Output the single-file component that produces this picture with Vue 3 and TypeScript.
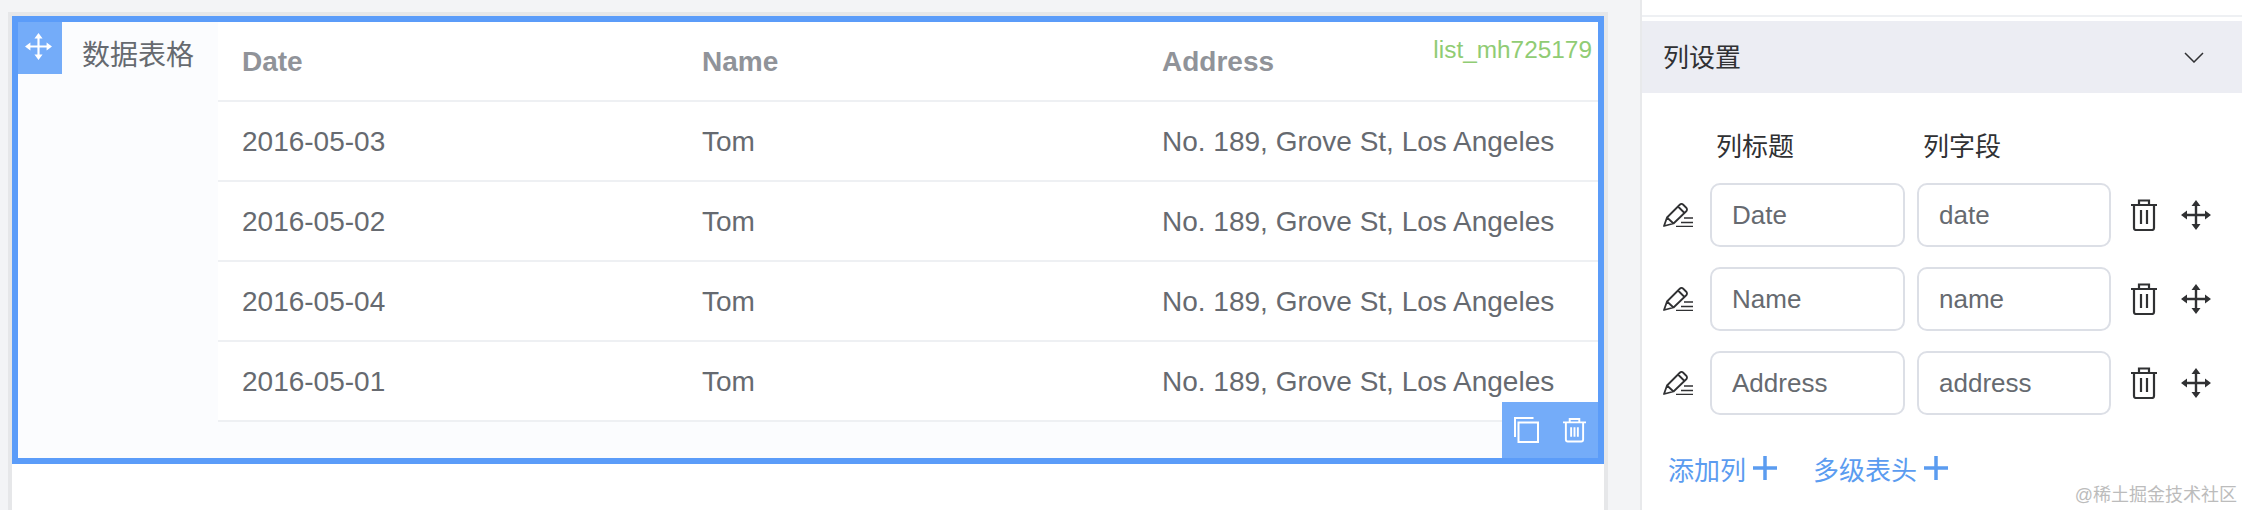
<script setup lang="ts">
interface Row { date: string; name: string; address: string }
const rows: Row[] = [
  { date: '2016-05-03', name: 'Tom', address: 'No. 189, Grove St, Los Angeles' },
  { date: '2016-05-02', name: 'Tom', address: 'No. 189, Grove St, Los Angeles' },
  { date: '2016-05-04', name: 'Tom', address: 'No. 189, Grove St, Los Angeles' },
  { date: '2016-05-01', name: 'Tom', address: 'No. 189, Grove St, Los Angeles' },
]
const columns = [
  { title: 'Date', field: 'date' },
  { title: 'Name', field: 'name' },
  { title: 'Address', field: 'address' },
]
</script>

<template>
  <div class="page">
    <main class="stage">
      <div class="canvas">
        <section class="widget">
          <div class="handle">
            <svg class="move-white" viewBox="0 0 30 30">
              <path d="M15 3v24M3 15h24" fill="none" stroke="currentColor" stroke-width="2.400" />
              <path d="M15 0l4.500 6h-9zM15 30l4.500-6h-9zM0 15l6-4.500v9zM30 15l-6-4.500v9z" fill="currentColor" />
            </svg>
          </div>
          <span class="widget-id">list_mh725179</span>
          <div class="form-label">数据表格</div>
          <table class="data-table">
            <thead>
              <tr>
                <th v-for="c in columns" :key="c.field">{{ c.title }}</th>
              </tr>
            </thead>
            <tbody>
              <tr v-for="(r, i) in rows" :key="i">
                <td>{{ r.date }}</td>
                <td>{{ r.name }}</td>
                <td>{{ r.address }}</td>
              </tr>
            </tbody>
          </table>
          <div class="actions">
            <svg class="copy-icon" viewBox="0 0 26 26" fill="none" stroke="currentColor" stroke-width="2">
              <path d="M5.500 5.500h19.500v19.500H5.500z" />
              <path d="M2 20V1h18.500" />
            </svg>
            <svg class="bin-white" viewBox="0 0 24 26" fill="none" stroke="currentColor" stroke-width="2">
              <path d="M0 5h24M7 5V1.500h10V5M3 5v18a2 2 0 0 0 2 2h14a2 2 0 0 0 2-2V5M8.500 10v10M12 10v10M15.500 10v10" />
            </svg>
          </div>
        </section>
      </div>
    </main>

    <aside class="panel">
      <div class="panel-top"></div>
      <header class="section-head">
        <span class="section-title">列设置</span>
        <svg class="chevron" viewBox="0 0 20 11" fill="none" stroke="currentColor" stroke-width="1.500">
          <path d="M1 1l9 9 9-9" />
        </svg>
      </header>
      <div class="section-body">
        <div class="col-grid titles">
          <span></span>
          <span class="col-title">列标题</span>
          <span class="col-title">列字段</span>
        </div>
        <div v-for="c in columns" :key="c.field" class="col-grid col-row">
          <svg class="pencil" viewBox="0 0 30 24" fill="none" stroke="currentColor" stroke-width="1.800">
            <path d="M1 23l3-8.500L17 1.500q1.500-1.200 3 0l3.500 3.500q1 1.500 0 3L10.500 20.500zM4 14.500l6.500 6M15 3.500l6.500 6.500" stroke-linejoin="round" />
            <path d="M21 15h9M18 19.500h12M13 23.500h17" stroke-width="1.400" />
          </svg>
          <input class="text-input" :value="c.title" readonly />
          <input class="text-input" :value="c.field" readonly />
          <svg class="bin" viewBox="0 0 26 32" fill="none" stroke="currentColor" stroke-width="2.200">
            <path d="M0 6h26M8 6V1.500h10V6M3 6v23a2 2 0 0 0 2 2h16a2 2 0 0 0 2-2V6M10 11v14M16 11v14" />
          </svg>
          <svg class="move" viewBox="0 0 30 30">
            <path d="M15 3v24M3 15h24" fill="none" stroke="currentColor" stroke-width="2.400" />
            <path d="M15 0l4.500 6h-9zM15 30l4.500-6h-9zM0 15l6-4.500v9zM30 15l-6-4.500v9z" fill="currentColor" />
          </svg>
        </div>
        <div class="add-row">
          <button class="link-btn" type="button">
            添加列
            <svg class="plus" viewBox="0 0 24 24"><path d="M12 0v24M0 12h24" stroke="currentColor" stroke-width="3.500" /></svg>
          </button>
          <button class="link-btn" type="button">
            多级表头
            <svg class="plus" viewBox="0 0 24 24"><path d="M12 0v24M0 12h24" stroke="currentColor" stroke-width="3.500" /></svg>
          </button>
        </div>
      </div>
      <span class="watermark">@稀土掘金技术社区</span>
    </aside>
  </div>
</template>

<style scoped>
.page {
  width: 2242px;
  height: 510px;
  display: flex;
  overflow: hidden;
  background: #f3f4f6;
  font-family: "Liberation Sans", "Noto Sans CJK SC", sans-serif;
  color: #666a70;
}
.stage {
  width: 1640px;
  flex: none;
  box-sizing: border-box;
  padding: 12px 32px 0 8px;
}
.canvas {
  height: 100%;
  box-sizing: border-box;
  background: #fff;
  border: 4px solid #e6e7e9;
  border-bottom: 0;
}
.widget {
  position: relative;
  height: 448px;
  box-sizing: border-box;
  border: 6px solid #5b9cf9;
  background: #fbfcfe;
  display: flex;
  align-items: flex-start;
}
.handle {
  position: absolute;
  left: 0;
  top: 0;
  width: 44px;
  height: 52px;
  box-sizing: border-box;
  padding: 0 3px 3px 0;
  background: #74acf9;
  color: #fff;
  display: flex;
  align-items: center;
  justify-content: center;
}
.move-white { width: 27px; height: 27px; }
.widget-id {
  position: absolute;
  right: 6px;
  top: 13px;
  font-size: 24.400px;
  line-height: 30px;
  color: #90cc74;
  z-index: 1;
}
.form-label {
  width: 200px;
  flex: none;
  box-sizing: border-box;
  padding-right: 24px;
  text-align: right;
  font-size: 28px;
  line-height: 68px;
}
.data-table {
  width: 1380px;
  flex: none;
  table-layout: fixed;
  border-collapse: separate;
  border-spacing: 0;
  background: #fff;
  font-size: 28px;
}
.data-table th,
.data-table td {
  box-sizing: border-box;
  padding: 2px 24px 0;
  text-align: left;
  border-bottom: 2px solid #eef0f3;
}
.data-table th {
  height: 80px;
  color: #909399;
  font-weight: 700;
}
.data-table td { height: 80px; }
.actions {
  position: absolute;
  right: 0;
  bottom: 0;
  width: 96px;
  height: 56px;
  box-sizing: border-box;
  padding-left: 11px;
  background: #74acf9;
  color: #fff;
  display: flex;
  align-items: center;
  gap: 24px;
}
.copy-icon { width: 26px; height: 26px; }
.bin-white { width: 23px; height: 26px; }

.panel {
  position: relative;
  flex: 1;
  box-sizing: border-box;
  background: #fff;
  border-left: 2px solid #e8e9eb;
}
.panel-top {
  height: 15px;
  margin-bottom: 6px;
  border-bottom: 2px solid #eef0f3;
}
.section-head {
  height: 72px;
  box-sizing: border-box;
  padding: 0 38px 0 21px;
  margin-top: -2px;
  background: #ecedf3;
  color: #303133;
  font-size: 26px;
  display: flex;
  align-items: center;
  justify-content: space-between;
}
.section-title { padding-bottom: 4px; }
.chevron { width: 20px; height: 11px; }
.section-body { padding-top: 31px; }
.col-grid {
  display: grid;
  grid-template-columns: 56px 195px 194px 34px 42px;
  column-gap: 12px;
}
.titles { height: 40px; margin-bottom: 19px; align-items: center; }
.col-title {
  padding-left: 6px;
  font-size: 26px;
  color: #303133;
}
.col-row {
  height: 64px;
  margin-bottom: 20px;
  align-items: center;
}
.col-row:last-of-type { margin-bottom: 0; }
.pencil {
  width: 30px;
  height: 24px;
  margin-left: 21px;
  color: #303133;
}
.text-input {
  width: 100%;
  height: 64px;
  box-sizing: border-box;
  border: 2px solid #dcdfe6;
  border-radius: 10px;
  padding: 0 0 0 20px;
  outline: none;
  background: #fff;
  font: 26px "Liberation Sans", "Noto Sans CJK SC", sans-serif;
  color: #666a70;
}
.bin {
  width: 26px;
  height: 32px;
  margin-left: 8px;
  color: #303133;
}
.move {
  width: 30px;
  height: 30px;
  margin-left: 12px;
  color: #303133;
}
.add-row {
  display: flex;
  gap: 36px;
  margin-top: 33px;
  padding-left: 26px;
}
.link-btn {
  display: flex;
  align-items: center;
  gap: 7px;
  height: 40px;
  padding: 0;
  border: 0;
  background: none;
  font: 26px "Liberation Sans", "Noto Sans CJK SC", sans-serif;
  color: #5b9cf0;
}
.plus { width: 24px; height: 24px; }
.watermark {
  position: absolute;
  right: 5px;
  bottom: 5px;
  font-size: 18px;
  line-height: 20px;
  color: #bcbcbc;
}
</style>
